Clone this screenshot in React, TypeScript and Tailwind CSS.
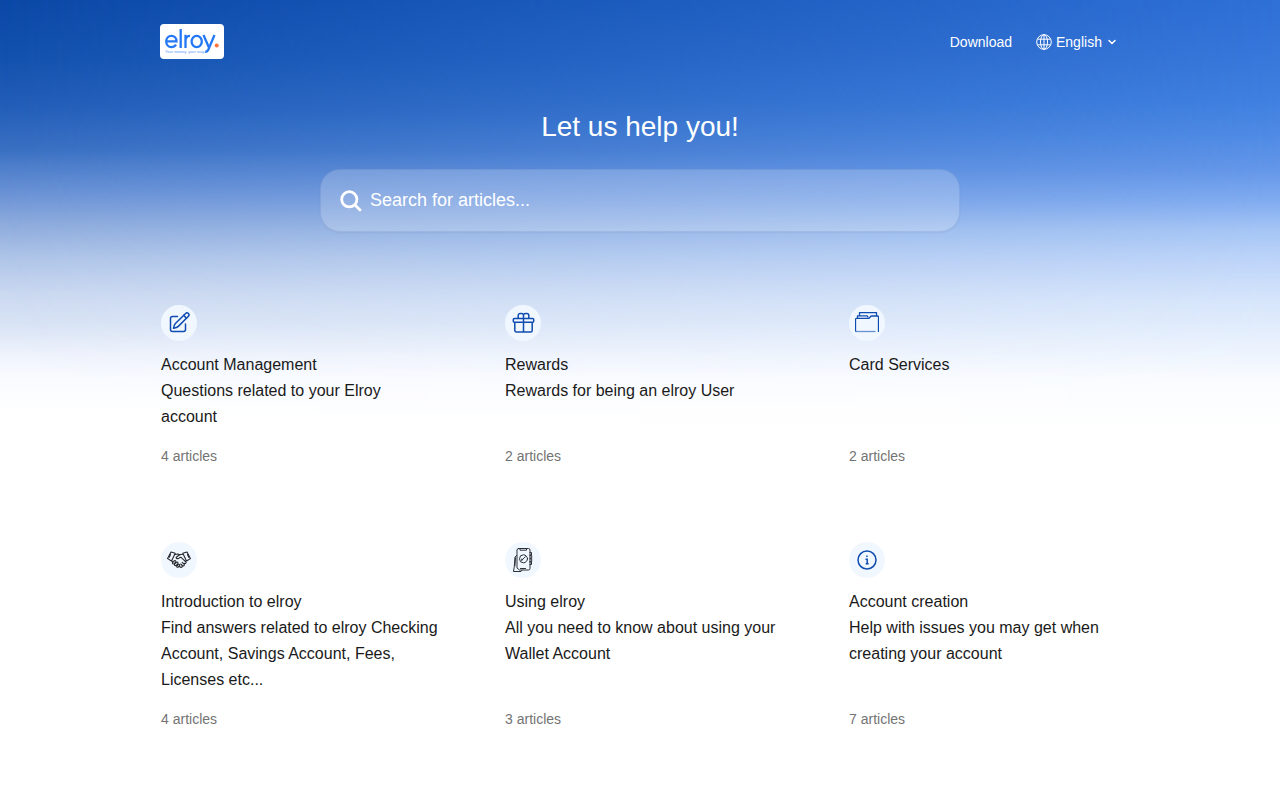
import type { ReactNode } from "react";

interface Collection {
  title: string;
  description?: string;
  count: number;
  icon: ReactNode;
}

function EditIcon() {
  return (
    <svg
      viewBox="0 0 24 24"
      className="size-6"
      fill="none"
      stroke="#0f4cb0"
      strokeWidth="1.5"
      strokeLinecap="round"
      strokeLinejoin="round"
    >
      <path d="M10.500 5.500h-5A2 2 0 0 0 3.500 7.500v11a2 2 0 0 0 2 2h11a2 2 0 0 0 2-2V13" />
      <path d="M18.600 2.500a2 2 0 0 1 2.800 0 2 2 0 0 1 0 2.800L11.300 15.400c-.9.900-3 1.600-4.800 1.900.3-1.800 1-3.900 1.900-4.800z" />
      <path d="m16.700 4.400 2.800 2.800" />
    </svg>
  );
}

function GiftIcon() {
  return (
    <svg
      viewBox="0 0 24 24"
      className="size-6"
      fill="none"
      stroke="#0f4cb0"
      strokeWidth="1.5"
      strokeLinejoin="round"
    >
      <rect x="2.300" y="7.500" width="20.400" height="3.800" rx="1" />
      <path d="M3.800 11.300v8.200A1.500 1.500 0 0 0 5.300 21h14.400a1.500 1.500 0 0 0 1.500-1.500v-8.200M12.500 7.500V21" />
      <path d="M12.500 7.500v-3a2 2 0 0 0-2-2H9.200a2 2 0 0 0-2 2v3M12.500 7.500v-3a2 2 0 0 1 2-2h1.300a2 2 0 0 1 2 2v3" />
    </svg>
  );
}

function FolderIcon() {
  return (
    <svg
      viewBox="0 0 24 24"
      className="size-6"
      fill="none"
      stroke="#0f4cb0"
      strokeWidth="1.300"
      strokeLinejoin="round"
    >
      <path d="M1.500 20.500a1 1 0 0 1-1-1V8.300a1 1 0 0 1 1-1H14L16.200 5H22.500a1 1 0 0 1 1 1v15" />
      <path d="M2.500 7V4.800h9.700l1 1.700M4.500 4.500V1.600h17V5" />
      <path d="M1.500 20.500h19" strokeOpacity="0.600" />
    </svg>
  );
}

function HandshakeIcon() {
  return (
    <svg
      viewBox="0 0 24 24"
      className="size-6"
      fill="none"
      stroke="#25282d"
      strokeWidth="1.100"
      strokeLinecap="round"
      strokeLinejoin="round"
    >
      <path d="m4 4 4.200 1.300L4.500 13 .6 10.600zM20 4l-4.200 1.300L19.500 13l3.900-2.400z" />
      <path d="M8 6.500 11 6l2 1M16 6.300 13 6.500 9.200 9.200c-.4 1.600 1.600 2 3.300.6l1.300-.6 5 4.600c.9 1.300-.6 2.300-1.700 1.500" />
      <path d="m4.800 13 1 1.200M19.200 12.500l-.8 1" />
      <path d="m5.500 14.700 1.700-1.900c1.200-.6 2 .5 1.400 1.300l-1.300 1.500c-1 .7-2.200.2-1.800-.9zM7.500 16.200l2-2c1.100-.4 1.800.6 1.300 1.400l-1.500 1.800c-1 .6-2 .1-1.800-1.200zM9.700 18l1.700-1.700c1-.3 1.700.6 1.200 1.400l-1.200 1.400c-.9.400-1.900.1-1.700-1.100z" />
      <path d="m12.500 18.500 1.200.9c1 .3 1.800-.5 1.300-1.400m-1.200-2 1.900 1.900c1.200.5 1.900-.6 1.300-1.700m-1.800-1.900 2.200 2" />
      <path d="M3.500 6.500 2.300 9.200M20.500 6.500l1.200 2.700" />
    </svg>
  );
}

function PhoneIcon() {
  return (
    <svg
      viewBox="-1 0 24 24"
      className="size-6"
      fill="none"
      stroke="#2d3036"
      strokeWidth="1"
      strokeLinecap="round"
      strokeLinejoin="round"
    >
      <path d="M6.500.500h10a1.500 1.500 0 0 1 1.500 1.500v18.500A1.500 1.500 0 0 1 16.500 22h-9L5 20V2A1.500 1.500 0 0 1 6.500.500z" />
      <path d="M8 .8v1.400h6.500V.8" />
      <path d="M8.500 20.500h5" />
      <circle cx="11.500" cy="10.800" r="4" />
      <path d="m9.800 12.300 3.600-3.600M9.800 11v1.300" />
      <path d="M4.700 7.500 3 9l-.7 9.500L1.500 23.500H9l1-1.300M3.500 10l-.6 8" />
      <path d="M18 4.500h1.500v2.600H18m0 .5h1.700v2.700H18m0 .5h1.700v2.700H18m0 .5h1.500v2.500H18" />
    </svg>
  );
}

function InfoIcon() {
  return (
    <svg
      viewBox="0 0 24 24"
      className="size-6"
      fill="none"
      stroke="#0f4cb0"
      strokeWidth="1.500"
    >
      <circle cx="12" cy="12" r="9" />
      <path d="M10.500 11.300h1.700v4.500M10.700 15.700h3" />
      <path d="M11.200 8.300h1.500" />
    </svg>
  );
}

function GlobeIcon() {
  return (
    <svg
      viewBox="0 0 16 16"
      className="size-4"
      fill="none"
      stroke="currentColor"
      strokeWidth="1"
    >
      <circle cx="8" cy="8" r="7.300" />
      <ellipse cx="8" cy="8" rx="3.500" ry="7.300" />
      <path d="M1.500 5.200h13M1.500 10.800h13M8 .7v14.600" />
    </svg>
  );
}

function Logo() {
  return (
    <svg viewBox="0 0 64 35" className="h-[35px] w-16" role="img" aria-label="elroy">
      <rect width="64" height="35" rx="4" fill="#fff" />
      <g fill="none" stroke="#2478f5" strokeWidth="2.300">
        <path d="M6.300 17.400h10.200c0-3.200-2.200-5.600-5.100-5.600s-5.200 2.500-5.200 5.700 2.200 5.600 5.200 5.600c2 0 3.600-.9 4.600-2.500" />
        <path d="M20.700 5v19M25.500 10.800V24M25.500 17c0-3.300 1.500-5.300 4.500-5" />
        <ellipse cx="36.700" cy="17.500" rx="5.100" ry="5.600" />
        <path d="m43.500 11 5.200 12M54.500 11l-6.200 14.800c-.7 1.600-1.500 2.100-3.100 1.900" />
      </g>
      <circle cx="56.700" cy="21.600" r="2" fill="#ff7438" />
      <text
        x="5"
        y="29"
        fill="#5b9af8"
        fontSize="4"
        fontFamily="Liberation Sans, sans-serif"
      >
        Your money, your way.
      </text>
    </svg>
  );
}

const collections: Collection[] = [
  {
    title: "Account Management",
    description: "Questions related to your Elroy account",
    count: 4,
    icon: <EditIcon />,
  },
  {
    title: "Rewards",
    description: "Rewards for being an elroy User",
    count: 2,
    icon: <GiftIcon />,
  },
  { title: "Card Services", count: 2, icon: <FolderIcon /> },
  {
    title: "Introduction to elroy",
    description:
      "Find answers related to elroy Checking Account, Savings Account, Fees, Licenses etc...",
    count: 4,
    icon: <HandshakeIcon />,
  },
  {
    title: "Using elroy",
    description: "All you need to know about using your Wallet Account",
    count: 3,
    icon: <PhoneIcon />,
  },
  {
    title: "Account creation",
    description: "Help with issues you may get when creating your account",
    count: 7,
    icon: <InfoIcon />,
  },
];

function Backdrop() {
  return (
    <div className="absolute inset-x-0 top-0 -z-10 h-[440px] bg-[linear-gradient(180deg,#0b48a6_0px,#1452af_60px,#245fb9_110px,#3a70c2_150px,#4c7dca_165px,#6a92d5_193px,#8caadc_223px,#afc5e8_258px,#cad8f0_293px,#d9e4f5_325px,#eff3fc_355px,#f9fbff_378px,#ffffff_415px)]">
      <div className="size-full bg-[linear-gradient(180deg,#2e70d6_0px,#3776da_50px,#4080e0_100px,#4f8be5_135px,#6497e9_170px,#80abf0_200px,#a5c5f5_230px,#bdd4f9_260px,#d6e5fb_300px,#e7f0fd_340px,#f9fbff_380px,#ffffff_430px)] [mask-image:linear-gradient(90deg,transparent,black)]" />
    </div>
  );
}

function Header() {
  return (
    <header className="flex items-center justify-between text-white">
      <a href="#home">
        <Logo />
      </a>
      <nav className="flex items-center gap-6 text-sm">
        <a href="#download">Download</a>
        <div className="flex items-center gap-1">
          <GlobeIcon />
          <label htmlFor="language" className="sr-only">
            Language
          </label>
          <div className="grid items-center">
            <select
              id="language"
              className="col-start-1 row-start-1 h-8 w-16 appearance-none bg-transparent"
            >
              <option>English</option>
            </select>
            <svg
              viewBox="0 0 16 16"
              className="pointer-events-none col-start-1 row-start-1 size-4 justify-self-end"
              fill="none"
              stroke="currentColor"
              strokeWidth="1.500"
              strokeLinecap="round"
              strokeLinejoin="round"
            >
              <path d="m5 6.500 3 3 3-3" />
            </svg>
          </div>
        </div>
      </nav>
    </header>
  );
}

function SearchForm() {
  return (
    <form
      className="mx-auto mt-[22px] flex h-[63px] max-w-[640px] items-center gap-2 rounded-[20px] border border-[#3060b0]/15 bg-white/20 px-[19px] shadow-xs"
      onSubmit={(e) => e.preventDefault()}
    >
      <svg
        viewBox="0 0 22 22"
        className="size-[22px] shrink-0"
        fill="none"
        stroke="#fff"
        strokeWidth="2.800"
        strokeLinecap="round"
      >
        <circle cx="9.300" cy="9.300" r="7.600" />
        <path d="m15 15 5 5" />
      </svg>
      <label htmlFor="search" className="sr-only">
        Search for articles
      </label>
      <input
        id="search"
        type="text"
        placeholder="Search for articles..."
        className="h-full min-w-0 flex-1 bg-transparent text-lg text-white outline-none placeholder:text-white"
      />
    </form>
  );
}

function CollectionCard({ title, description, count, icon }: Collection) {
  return (
    <a
      href="#collection"
      className="flex flex-col border border-transparent text-base/[26px] text-[#1a1a1a]"
    >
      <span className="flex size-9 items-center justify-center rounded-full bg-[#f1f7fe]">
        {icon}
      </span>
      <h2 className="mt-[11px]">{title}</h2>
      {description && <p>{description}</p>}
      <p className="mt-auto pt-4 text-sm/5 text-[#737373]">{count} articles</p>
    </a>
  );
}

export default function App() {
  return (
    <div className="relative isolate min-h-screen bg-white font-['Liberation_Sans',Arial,sans-serif]">
      <Backdrop />
      <div className="mx-auto max-w-[1000px] px-5 pt-6 pb-16">
        <Header />
        <h1 className="mt-12 text-center text-[28px]/10 text-white">
          Let us help you!
        </h1>
        <SearchForm />
        <main className="mt-[72px] grid grid-cols-1 gap-x-16 gap-y-[74px] sm:grid-cols-2 lg:-mr-2 lg:grid-cols-3">
          {collections.map((collection) => (
            <CollectionCard key={collection.title} {...collection} />
          ))}
        </main>
      </div>
    </div>
  );
}
